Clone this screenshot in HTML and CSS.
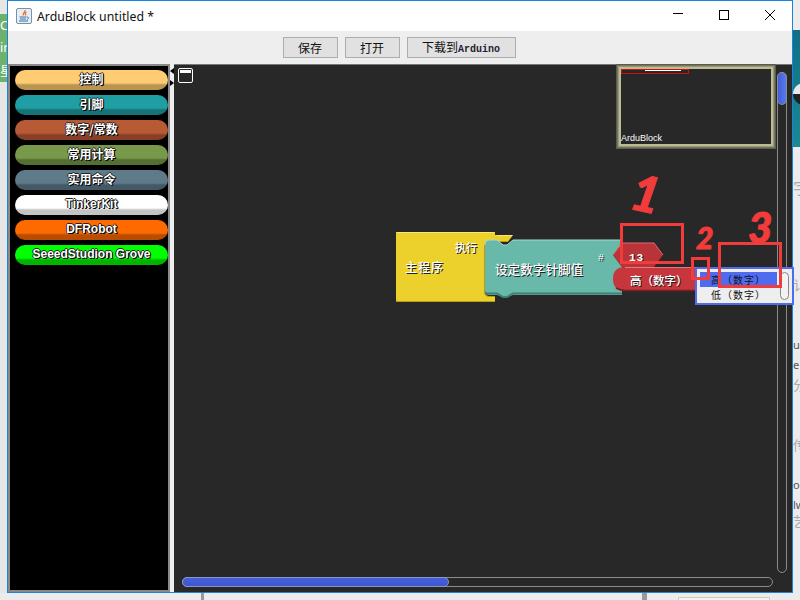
FILE: index.html
```html
<!DOCTYPE html>
<html lang="zh-CN">
<head>
  <meta charset="UTF-8" />
  <title>ArduBlock untitled *</title>
  <link rel="stylesheet" href="styles.css">
</head>
<body>
  <div class="desktop">
    <div class="side-left">
      <div class="green-tab">
        <span>C</span>
        <span>ir</span>
        <span>星</span>
      </div>
    </div>

    <div class="window">
      <div class="titlebar">
        <svg class="app-icon" width="16" height="16" viewBox="0 0 16 16">
          <rect x="0.5" y="0.5" width="15" height="15" rx="1.5" fill="#e6eef5" stroke="#7d8fa3" />
          <path d="M9 2c1 2-3 3-1.500 5.500M10.500 4c-2 1-1.500 2-.5 3.500" fill="none" stroke="#e8702a" stroke-width="1.300" />
          <path d="M3.500 9h7M4 11h6M3 13h9M11 9c2 0 2 2 0 2.500" fill="none" stroke="#3a6ea5" stroke-width="1" />
        </svg>
        <span class="title">ArduBlock untitled *</span>
        <div class="controls">
          <svg width="12" height="12" viewBox="0 0 12 12"><path d="M1 3.500h10" stroke="#000" /></svg>
          <svg width="12" height="12" viewBox="0 0 12 12"><rect x="1.500" y="0.500" width="9" height="9" fill="none" stroke="#000" /></svg>
          <svg width="12" height="12" viewBox="0 0 12 12"><path d="M1 0l10 10M11 0L1 10" stroke="#000" /></svg>
        </div>
      </div>

      <div class="toolbar">
        <button class="btn btn-small">保存</button>
        <button class="btn btn-small">打开</button>
        <button class="btn btn-wide">下载到<span class="mono">Arduino</span></button>
      </div>

      <div class="main">
        <div class="palette">
          <div class="cat cat-control">控制</div>
          <div class="cat cat-pin">引脚</div>
          <div class="cat cat-number">数字/常数</div>
          <div class="cat cat-math">常用计算</div>
          <div class="cat cat-util">实用命令</div>
          <div class="cat cat-tinker">TinkerKit</div>
          <div class="cat cat-df">DFRobot</div>
          <div class="cat cat-seeed">SeeedStudion Grove</div>
        </div>

        <div class="divider">
          <span class="arrow-left"></span>
          <span class="arrow-right"></span>
        </div>

        <div class="canvas">
          <div class="collapse"><span></span></div>

          <div class="minimap">
            <div class="minimap-view"><span></span></div>
            <div class="minimap-label">ArduBlock</div>
          </div>

          <div class="vscroll"><div class="vthumb"></div></div>
          <div class="hscroll"><div class="hthumb"></div></div>

          <!-- blocks, viewBox is in page coordinates -->
          <svg class="blocks" width="320" height="85" viewBox="390 225 320 85">
            <path d="M396 232H495V235H513L508 242H490Q485 242 485 247V291Q485 296 490 296H495V302H396Z" fill="#b89c18" />
            <path d="M396 232H495V235H513L508 241H490Q484 241 484 247V292Q484 297 490 297H495V301H398Q396 301 396 299Z" fill="#ecd02c" />
            <path d="M397 232.500H494M497 235.500H512" stroke="#f6e878" fill="none" />
            <path d="M485 245Q485 240 490 240H497L503 245H507L513 240H622V243L613 255L622 267V295H513L507 297H503L497 295H490Q485 295 485 290Z" fill="#68b9a9" />
            <path d="M485 245Q485 240 490 240H497L503 245H507L513 240H622" fill="none" stroke="#a5dacf" />
            <path d="M486 293.500H497L503 297H507L513 293.500H622" fill="none" stroke="#3f8073" stroke-width="2" />
            <path d="M613 255L622 243H654L663 255L654 267H622Z" fill="#b93338" />
            <path d="M613 255L622 243H654L663 255" fill="none" stroke="#e06a70" />
            <path d="M654 267L663 255" fill="none" stroke="#7e1d22" />
            <path d="M625 267H700V291H625Q613 291 613 279Q613 267 625 267Z" fill="#c6363c" />
            <path d="M625 267.500H700" stroke="#e6797d" fill="none" />
            <path d="M616 288Q620 290.500 626 290.500H700" stroke="#7e1d22" fill="none" stroke-width="1.500" />
          </svg>

          <div class="label label-main">主程序</div>
          <div class="label label-run">执行</div>
          <div class="label label-set">设定数字针脚值</div>
          <div class="label label-hash">#</div>
          <div class="label label-13">13</div>
          <div class="label label-high">高（数字）</div>

          <div class="dropdown">
            <div class="dropdown-list">
              <div class="dropdown-item selected">高（数字）</div>
              <div class="dropdown-item">低（数字）</div>
            </div>
            <div class="dropdown-thumb"></div>
          </div>

          <!-- red marks drawn over the screenshot -->
          <div class="mark mark-1"></div>
          <div class="mark mark-2"></div>
          <div class="mark mark-3"></div>
          <div class="digit digit-1">1</div>
          <div class="digit digit-2">2</div>
          <div class="digit digit-3">3</div>
        </div>
      </div>
    </div>

    <div class="side-right">
      <div class="teal-band"><span class="dark-ball"></span></div>
      <div class="side-text">
        <p class="t1">字</p>
        <p class="t9">讠</p>
        <p class="t2">up</p>
        <p class="t3">e（</p>
        <p class="t4">分</p>
        <p class="t5">传</p>
        <p class="t6">o（</p>
        <p class="t7">lw</p>
        <p class="t8">艺</p>
      </div>
    </div>

    <div class="bottom-strip">
      <span class="strip-bar"></span>
      <span class="strip-bar strip-bar-2"></span>
      <span class="strip-box"></span>
    </div>
  </div>
</body>
</html>
```

FILE: styles.css
```css
html, body {
  margin: 0;
  height: 100%;
  overflow: hidden;
}
body {
  font-family: "Noto Sans", "Noto Sans CJK SC", sans-serif;
  background: #e8e8e8;
}
.desktop {
  display: grid;
  grid-template-columns: 7px 786px 7px;
  grid-template-rows: 593px 7px;
  width: 800px;
  height: 600px;
}

/* what shows behind the window */
.side-left {
  background: #e6e6e6;
  padding-top: 14px;
}
.green-tab {
  display: flex;
  flex-direction: column;
  justify-content: space-around;
  height: 68px;
  background: #6cb26c;
  color: #fff;
  font-size: 13px;
  line-height: 15px;
  overflow: hidden;
}
.side-right {
  background: #ececec;
  overflow: hidden;
}
.teal-band {
  position: relative;
  height: 117px;
  margin-top: 30px;
  background: linear-gradient(#0f6f86, #1a8a94);
}
.dark-ball {
  position: absolute;
  left: 0;
  top: 53px;
  width: 22px;
  height: 22px;
  border-radius: 50%;
  background: linear-gradient(#e8e8e8 50%, #222 50%);
}
.side-text p {
  margin: 0;
  height: 0;
  position: relative;
  font-size: 13px;
  line-height: 16px;
  color: #aaa;
  white-space: nowrap;
}
.t1 { top: 33px; color: #444; }
.side-text .t1 { font-size: 16px; }
.t9 { top: 130px; }
.t2 { top: 190px; }
.t3 { top: 210px; }
.t4 { top: 230px; }
.t5 { top: 290px; }
.t6 { top: 330px; }
.t7 { top: 350px; }
.t8 { top: 366px; }
.side-text .t2, .side-text .t3, .side-text .t6, .side-text .t7 {
  color: #555;
  font-size: 11px;
}
.bottom-strip {
  grid-column: 1 / 4;
  position: relative;
  background: #ececec;
  overflow: hidden;
}
.strip-bar {
  position: absolute;
  left: 201px;
  top: 0;
  width: 3px;
  height: 7px;
  background: #999;
}
.strip-bar-2 {
  left: 642px;
  width: 5px;
}
.strip-box {
  position: absolute;
  left: 678px;
  top: 4px;
  width: 90px;
  height: 10px;
  background: #f4f4f4;
  border: 1px solid #c8d4b0;
}

/* window */
.window {
  display: flex;
  flex-direction: column;
  box-sizing: border-box;
  border: 1px solid #1a84dc;
  background: #eee;
  min-height: 0;
}
.titlebar {
  display: flex;
  align-items: center;
  height: 30px;
  flex-shrink: 0;
  padding-left: 8px;
  background: #fff;
}
.app-icon {
  margin-right: 5px;
}
.title {
  font-size: 12.300px;
  color: #111;
}
.controls {
  display: flex;
  gap: 34px;
  margin-left: auto;
  margin-right: 16px;
}
.toolbar {
  display: flex;
  justify-content: center;
  align-items: flex-start;
  gap: 7px;
  height: 33px;
  flex-shrink: 0;
  padding: 6px 2px 0 0;
  box-sizing: border-box;
}
.btn {
  height: 21px;
  padding: 0;
  background: #e1e1e1;
  border: 1px solid #adadad;
  color: #111;
  font-family: "Noto Sans CJK SC", sans-serif;
  font-size: 12px;
  line-height: 18px;
}
.btn-small {
  width: 55px;
}
.btn-wide {
  width: 109px;
}
.mono {
  font-family: "Liberation Mono", monospace;
  font-size: 10px;
  font-weight: bold;
  color: #223;
}
.main {
  display: flex;
  flex: 1;
  min-height: 0;
}

/* left palette */
.palette {
  display: flex;
  flex-direction: column;
  gap: 5px;
  width: 162px;
  box-sizing: border-box;
  padding: 4px 0 0 5px;
  background: #000;
  border: 2px solid #8a8a8a;
}
.cat {
  height: 20px;
  border-radius: 10px;
  text-align: center;
  color: #fff;
  font-family: "Noto Sans CJK SC", sans-serif;
  font-size: 12px;
  font-weight: 700;
  line-height: 18px;
  text-shadow: 1px 1px 0 #000, -1px 0 0 #222, 0 -1px 0 #222, 1px 0 0 #222;
}
.cat-control { background: linear-gradient(#ffcc73 65%, #b89550 75%); }
.cat-pin { background: linear-gradient(#1f9fa3 65%, #167478 75%); }
.cat-number { background: linear-gradient(#b85a36 65%, #874027 75%); }
.cat-math { background: linear-gradient(#78994a 65%, #546e33 75%); }
.cat-util { background: linear-gradient(#5f7b8a 65%, #445966 75%); }
.cat-tinker { background: linear-gradient(#fff 65%, #c4c4c4 75%); }
.cat-df { background: linear-gradient(#ff6a00 65%, #b84c00 75%); }
.cat-seeed { background: linear-gradient(#00ff00 65%, #00b400 75%); }
.cat-tinker, .cat-df, .cat-seeed {
  font-family: "Liberation Sans", sans-serif;
}

.divider {
  position: relative;
  width: 4px;
  background: #eee;
}
.arrow-left, .arrow-right {
  position: absolute;
  left: 0;
  width: 0;
  height: 0;
  border-top: 3px solid transparent;
  border-bottom: 3px solid transparent;
}
.arrow-left {
  top: 4px;
  border-right: 4px solid #000;
}
.arrow-right {
  top: 16px;
  border-left: 4px solid #000;
}

/* workspace, a free canvas */
.canvas {
  position: relative;
  flex: 1;
  background: #282828;
  box-shadow: inset 0 1px 0 #777;
}
.collapse {
  position: absolute;
  left: 4px;
  top: 4px;
  width: 15px;
  height: 15px;
  box-sizing: border-box;
  border: 1px solid #fff;
  border-radius: 2px;
}
.collapse span {
  display: block;
  margin: 1px;
  height: 3px;
  background: #fff;
}
.minimap {
  position: absolute;
  left: 442px;
  top: 0;
  width: 160px;
  height: 85px;
  box-sizing: border-box;
  border: 1px solid #5c5c4c;
  box-shadow: inset 0 0 0 1px #76765f, inset 0 0 0 2px #96967a, inset 0 0 0 4px #bcbc94;
  background: #282828;
}
.minimap-view {
  position: absolute;
  left: 4px;
  top: 4px;
  width: 68px;
  height: 5px;
  box-sizing: border-box;
  border: 1px solid #d01010;
}
.minimap-view span {
  display: block;
  margin-left: 23px;
  width: 36px;
  height: 1px;
  background: #fff;
}
.minimap-label {
  position: absolute;
  left: 4px;
  bottom: 4px;
  color: #fff;
  font-family: "Liberation Sans", sans-serif;
  font-size: 9px;
  line-height: 12px;
}
.vscroll {
  position: absolute;
  left: 603px;
  top: 8px;
  width: 10px;
  height: 501px;
  box-sizing: border-box;
  border: 1px solid #8c8c8c;
  border-radius: 5px;
}
.vthumb {
  margin: -1px;
  height: 33px;
  border-radius: 5px;
  background: linear-gradient(90deg, #3f5ed8, #5a78ee);
  border: 1px solid #8c8c8c;
  box-sizing: border-box;
  width: 10px;
}
.hscroll {
  position: absolute;
  left: 8px;
  top: 513px;
  width: 591px;
  height: 10px;
  box-sizing: border-box;
  border: 1px solid #8c8c8c;
  border-radius: 5px;
}
.hthumb {
  margin: -1px;
  width: 267px;
  height: 10px;
  box-sizing: border-box;
  border-radius: 5px;
  background: linear-gradient(#4560dc, #3f56cc);
  border: 1px solid #8a96c8;
}
.blocks {
  position: absolute;
  left: 216px;
  top: 161px;
}
.label {
  position: absolute;
  color: #fff;
  font-family: "Noto Sans CJK SC", sans-serif;
  font-weight: 500;
  white-space: nowrap;
  text-shadow: 1px 1px 0 #222;
}
.label-main { left: 231px; top: 194px; font-size: 12px; line-height: 18px; letter-spacing: 1px; }
.label-run { left: 281px; top: 175px; font-size: 11px; line-height: 16px; }
.label-set { left: 321px; top: 196px; font-size: 12.600px; line-height: 18px; }
.label-hash { left: 424px; top: 188px; font-size: 10px; line-height: 14px; font-family: "Liberation Mono", monospace; }
.label-13 { left: 455px; top: 187px; font-size: 11px; line-height: 14px; font-family: "Liberation Mono", monospace; font-weight: 700; letter-spacing: 1px; }
.label-high { left: 456px; top: 208px; font-size: 11.500px; line-height: 17px; }

.dropdown {
  position: absolute;
  left: 521px;
  top: 203px;
  display: flex;
  gap: 3px;
  width: 99px;
  height: 38px;
  box-sizing: border-box;
  padding: 3px 3px 2px 3px;
  border: 2px solid #4f6cf0;
  background: #eee;
}
.dropdown-list {
  width: 78px;
}
.dropdown-item {
  height: 15px;
  padding-left: 11px;
  color: #111;
  font-family: "Noto Sans CJK SC", sans-serif;
  font-size: 10px;
  letter-spacing: 1px;
  line-height: 15px;
  white-space: nowrap;
}
.dropdown-item.selected {
  background: #4f6cf0;
}
.dropdown-thumb {
  width: 9px;
  height: 28px;
  box-sizing: border-box;
  border: 1px solid #888;
  border-radius: 5px;
  background: #f2f2f2;
}
.mark {
  position: absolute;
  box-sizing: border-box;
  border: 3px solid #f23c3c;
}
.mark-1 { left: 446px; top: 159px; width: 64px; height: 41px; }
.mark-2 { left: 517px; top: 193px; width: 19px; height: 23px; }
.mark-3 { left: 544px; top: 178px; width: 64px; height: 46px; }
.digit {
  position: absolute;
  color: #f23c3c;
  font-family: "Lato", sans-serif;
  font-weight: 900;
  font-style: italic;
  line-height: 1;
  -webkit-text-stroke: 1px #f23c3c;
}
.digit-1 { left: 458px; top: 104px; font-size: 50px; transform: rotate(12deg); }
.digit-2 { left: 522px; top: 158px; font-size: 30px; }
.digit-3 { left: 574px; top: 142px; font-size: 42px; }
```
